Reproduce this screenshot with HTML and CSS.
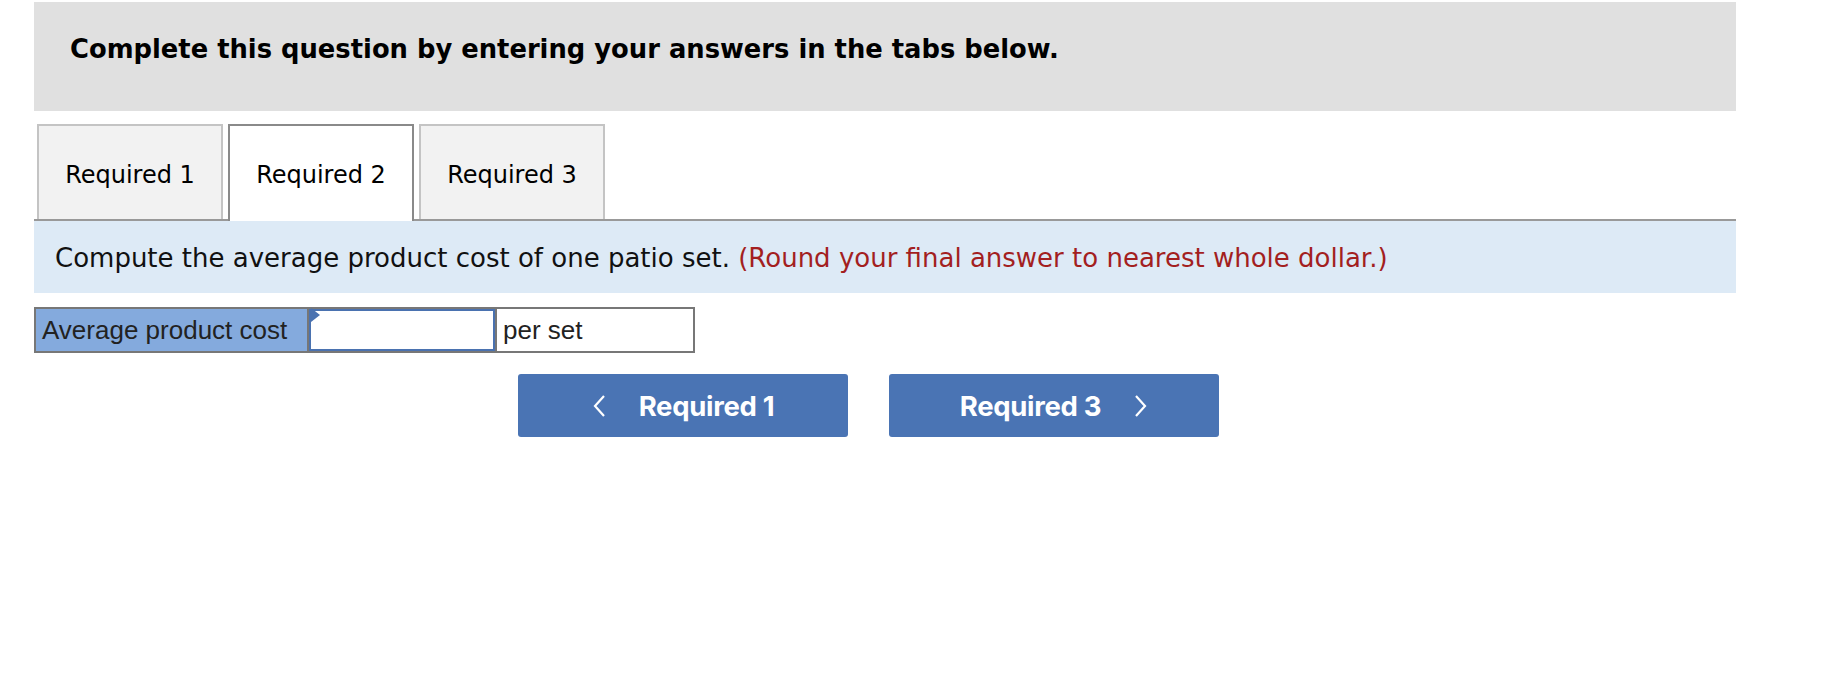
FILE: index.html
```html
<!DOCTYPE html>
<html>
<head>
<meta charset="utf-8">
<link rel="stylesheet" href="styles.css">
</head>
<body>
<div class="page">
  <div class="header">Complete this question by entering your answers in the tabs below.</div>
  <div class="tabs">
    <div class="tab">Required 1</div>
    <div class="tab active">Required 2</div>
    <div class="tab">Required 3</div>
  </div>
  <div class="instruction">Compute the average product cost of one patio set. <span class="note">(Round your final answer to nearest whole dollar.)</span></div>
  <div class="answer-row">
    <div class="label-cell">Average product cost</div>
    <div class="input-cell"><span class="flag"></span></div>
    <div class="unit-cell">per set</div>
  </div>
  <div class="nav">
    <div class="btn"><svg class="chev" width="14" height="24" viewBox="0 0 14 24"><polyline points="12,2 3,12 12,22" fill="none" stroke="#fff" stroke-width="2.2"/></svg><span>Required 1</span></div>
    <div class="btn"><span>Required 3</span><svg class="chev" width="14" height="24" viewBox="0 0 14 24"><polyline points="2,2 11,12 2,22" fill="none" stroke="#fff" stroke-width="2.2"/></svg></div>
  </div>
</div>
</body>
</html>
```
FILE: styles.css
```css
html, body { margin: 0; padding: 0; background: #fff; }
.page { margin-left: 34px; width: 1702px; padding-top: 2px; font-family: "DejaVu Sans", Verdana, sans-serif; color: #000; }
.header { background: #e0e0e0; height: 109px; box-sizing: border-box; padding: 32px 0 0 36px; font-weight: bold; font-size: 25.8px; }
.tabs { display: flex; gap: 5px; margin-top: 13px; padding-left: 3px; border-bottom: 2px solid #999; height: 95px; }
.tab { width: 186px; height: 95px; box-sizing: border-box; background: #f2f2f2; border: 2px solid #c4c4c4; border-bottom: none; display: flex; align-items: center; justify-content: center; padding-top: 5px; font-size: 24px; }
.tab.active { background: #fff; border-color: #8a8a8a; height: 97px; padding-bottom: 2px; position: relative; z-index: 1; }
.instruction { background: #ddeaf6; height: 72px; box-sizing: border-box; padding: 22px 0 0 21px; font-size: 26px; color: #111; }
.note { color: #a31f1f; }
.answer-row { display: flex; margin-top: 14px; height: 46px; width: 661px; box-sizing: border-box; border: 2px solid #777; font-family: "Liberation Sans", Arial, sans-serif; font-size: 26px; color: #222; }
.label-cell { width: 273px; background: #84aadd; border-right: 2px solid #777; display: flex; align-items: center; padding-left: 6px; box-sizing: border-box; }
.input-cell { width: 186px; background: #fff; border: 2px solid #4a72b0; box-sizing: border-box; position: relative; }
.flag { position: absolute; left: 0; top: -3px; width: 0; height: 0; border-top: 7px solid transparent; border-bottom: 7px solid transparent; border-left: 9px solid #4a72b0; }
.unit-cell { flex: 1; display: flex; align-items: center; padding-left: 6px; border-left: 2px solid #777; }
.nav { display: flex; gap: 41px; margin: 21px 0 0 484px; }
.btn { width: 330px; height: 63px; background: #4a74b4; border-radius: 3px; color: #fff; font-family: Inter, Roboto, sans-serif; font-weight: 700; font-size: 27.5px; letter-spacing: -0.3px; display: flex; align-items: center; justify-content: center; gap: 33px; }
.chev { display: block; }
```
